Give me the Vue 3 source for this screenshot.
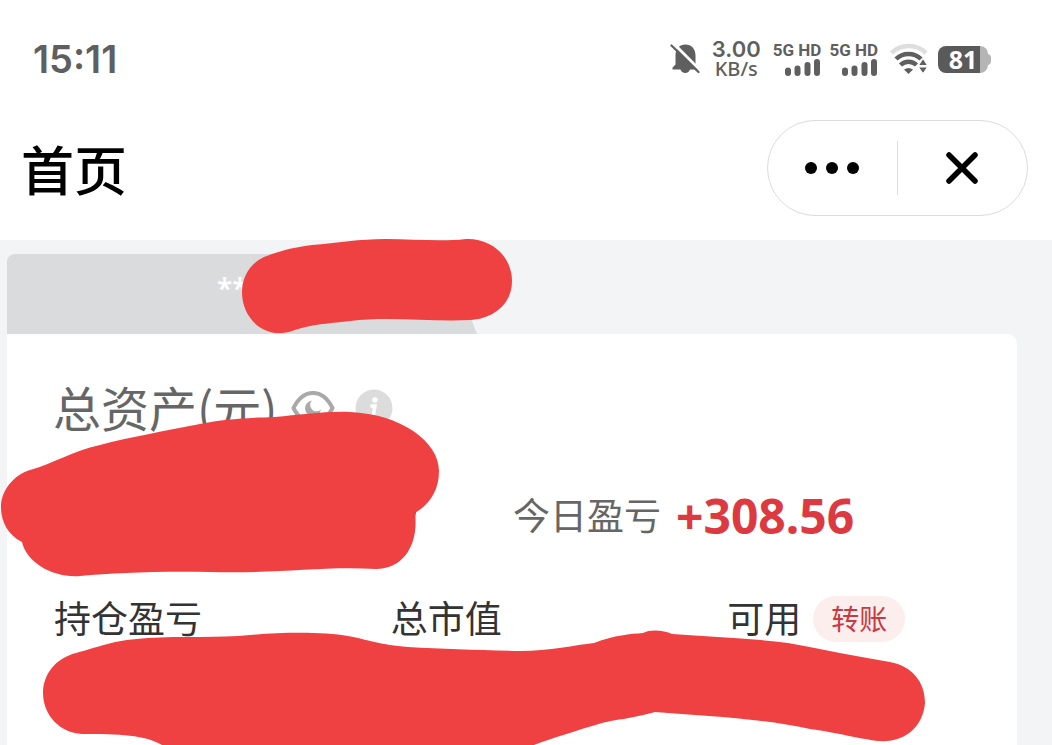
<script setup>
const networks = ['sim1', 'sim2']
const metrics = [
  { name: '持仓盈亏' },
  { name: '总市值' },
  { name: '可用', action: '转账' }
]
</script>

<template>
  <div class="page">
    <header class="top">
      <div class="status">
        <span class="clock">15:11</span>
        <div class="indicators">
          <svg class="bell" viewBox="0 0 30 32" width="30" height="32" aria-hidden="true">
            <path d="M2.500 26.500V24.500L5.500 21.500V12.500C5.500 6 9.500 1.500 15.500 1.500s10 4.500 10 11v9l2.500 3v2H20a5 5 0 0 1-9.500 0Z" fill="#5f5f5f" />
            <path d="M4 1 31 28" stroke="#fff" stroke-width="3" />
            <path d="M1.500 2.500 28.500 29" stroke="#5f5f5f" stroke-width="2.200" stroke-linecap="round" />
          </svg>
          <div class="speed"><b>3.00</b><span>KB/s</span></div>
          <div v-for="n in networks" :key="n" class="network">
            <span>5G HD</span>
            <svg viewBox="0 0 37 18" width="37" height="18" aria-hidden="true">
              <g stroke="#5f5f5f" stroke-width="6" stroke-linecap="round">
                <path d="M4 11.500v2.500M13.500 9.500v4.500M23.500 6v8M33 3v11" />
              </g>
            </svg>
          </div>
          <svg class="wifi" viewBox="0 0 38 32" width="38" height="32" aria-hidden="true">
            <g fill="none" stroke-width="4.500">
              <path d="M1.500 10A25 25 0 0 1 36 10" stroke="#dedede" />
              <path d="M6 16A18 18 0 0 1 31 16" stroke="#5f5f5f" />
              <path d="M10.500 22A11.500 11.500 0 0 1 26.500 22" stroke="#5f5f5f" />
            </g>
            <path d="M14 26.500q4.500-3 9 0L18.500 31Z" fill="#5f5f5f" />
            <path d="M28.500 22.500 33 15.500 37.500 22.500ZM28.500 24H37.500L33 30.500Z" fill="#5f5f5f" stroke="#fff" stroke-width="1" />
          </svg>
          <div class="battery"><span>81</span></div>
        </div>
      </div>
      <div class="titlebar">
        <h1>首页</h1>
        <div class="capsule">
          <button type="button" aria-label="更多">
            <svg viewBox="0 0 56 14" width="56" height="14"><circle cx="7" cy="7" r="6" /><circle cx="28" cy="7" r="6" /><circle cx="49" cy="7" r="6" /></svg>
          </button>
          <i></i>
          <button type="button" aria-label="关闭">
            <svg viewBox="0 0 34 34" width="34" height="34"><path d="M4 4 30 30M30 4 4 30" stroke="#000" stroke-width="5.500" stroke-linecap="round" /></svg>
          </button>
        </div>
      </div>
    </header>

    <main class="content">
      <div class="tab"><span>**</span></div>
      <section class="card">
        <div class="heading">
          <h2>总资产(元)</h2>
          <button type="button" aria-label="显示或隐藏金额">
            <svg viewBox="0 0 44 36" width="44" height="36">
              <path d="M2.500 18Q10 3 22 3T41.500 18Q34 33 22 33T2.500 18Z" fill="none" stroke="#a9a9a9" stroke-width="4" />
              <path d="M21 10.500A8 8 0 1 0 30 19.500A6 6 0 0 1 21 10.500Z" fill="#a9a9a9" />
            </svg>
          </button>
          <button type="button" aria-label="说明">
            <svg viewBox="0 0 38 38" width="38" height="38">
              <circle cx="19" cy="19" r="18.500" fill="#dcdcdc" />
              <circle cx="20" cy="11" r="2.800" fill="#fff" />
              <path d="M15.500 17H20L18 28H22" fill="none" stroke="#fff" stroke-width="3.500" />
            </svg>
          </button>
        </div>
        <div class="today">
          <div class="profit"><span>今日盈亏</span><strong>+308.56</strong></div>
        </div>
        <div class="metrics">
          <div v-for="m in metrics" :key="m.name" class="metric">
            <span>{{ m.name }}</span>
            <button v-if="m.action" type="button">{{ m.action }}</button>
          </div>
        </div>
      </section>
    </main>

    <svg class="marks" viewBox="0 0 1052 745" width="1052" height="745" aria-hidden="true">
      <path d="M410 513 416 511 415 517 412 521Z" fill="#222" />
      <g fill="#ef4142">
        <path d="M264 257C282 250 296 247 312 245C337 243 360 239 385 239C415 239 440 242 466 239C492 238 512 257 512 281C512 305 492 319 470 320C430 322 390 316 350 321C325 324 312 324 292 331C265 340 242 319 242 292C242 276 251 263 264 257Z" />
        <path d="M30 470C55 463 72 451 100 445C130 437 165 431 200 424C225 419 245 418 275 417C300 415 325 411 350 412C400 414 439 441 439 471C439 490 430 504 415 513C419 545 403 569 376 569C320 566 280 574 210 572C155 571 115 573 80 576C53 578 27 563 22 542C8 535 1 522 1 507C1 490 14 475 30 470Z" />
        <path d="M76 653C105 645 115 640 148 638C180 636 220 638 250 635C285 632 325 632 348 636C370 640 380 645 408 647C445 649 480 650 520 651C550 651 575 645 594 643C615 635 630 634 643 633C650 629 664 630 672 634C710 637 750 638 788 643C825 650 855 656 890 662C912 666 925 682 925 703C923 726 906 743 878 741C855 738 840 733 810 729C760 718 705 716 655 712C630 719 618 719 602 723C575 731 553 738 534 745L530 750H175L162 745C145 735 120 734 82 734C60 733 43 715 43 693C43 674 56 658 76 653Z" />
      </g>
    </svg>
  </div>
</template>

<style>
body { background: #f3f4f6; }
</style>

<style scoped>
* { box-sizing: border-box; }
.page {
  position: relative;
  display: flex;
  flex-direction: column;
  min-height: 100vh;
  overflow: hidden;
  font-family: "Noto Sans CJK SC", sans-serif;
  background: #f3f4f6;
}
button { padding: 0; border: 0; background: none; font: inherit; display: flex; align-items: center; justify-content: center; }
svg { display: block; flex: none; }
h1, h2 { margin: 0; }
.top { background: #fff; padding-bottom: 24px; }
.status {
  display: flex;
  align-items: center;
  justify-content: space-between;
  height: 118px;
  padding: 0 60px 0 33px;
  color: #5f5f5f;
  font-family: Inter, sans-serif;
}
.clock { font-size: 38px; font-weight: 600; }
.indicators { display: flex; align-items: center; gap: 12px; }
.speed { display: flex; flex-direction: column; align-items: center; line-height: 20px; }
.speed b { font-size: 22px; font-weight: 600; }
.speed span { font: 500 20px/20px "Noto Sans", sans-serif; }
.network { display: flex; flex-direction: column; align-items: flex-end; }
.network + .network { margin-left: -4px; }
.network span { font: 700 17px/18px Roboto, sans-serif; }
.battery {
  position: relative;
  width: 50px;
  height: 27px;
  margin-right: 4px;
  border-radius: 8px;
  background: linear-gradient(90deg, #5a5a5a 42px, #b4b4b4 42px);
  color: #fff;
  font: 700 25px/27px "Noto Sans", sans-serif;
  text-align: center;
}
.battery::after {
  content: "";
  position: absolute;
  right: -3px;
  top: 8px;
  width: 4px;
  height: 11px;
  border-radius: 0 4px 4px 0;
  background: #b4b4b4;
}
.wifi { margin-right: -2px; }
.titlebar { display: flex; align-items: center; justify-content: space-between; padding: 2px 24px 0 21px; }
h1 { font-size: 53px; line-height: 96px; font-weight: 500; }
.capsule {
  display: flex;
  align-items: center;
  width: 261px;
  height: 96px;
  border: 1px solid #dcdcdc;
  border-radius: 48px;
}
.capsule button { flex: 1; height: 100%; padding-right: 2px; }
.capsule i { width: 1px; height: 54px; background: #dcdcdc; }
.content { flex: 1; display: flex; flex-direction: column; padding: 14px 35px 0 7px; }
.tab {
  width: 470px;
  height: 80px;
  padding: 16px 0 0 210px;
  border-radius: 8px 0 0 0;
  background: #dadbdd;
  clip-path: polygon(0 0, 440px 0, 100% 100%, 0 100%);
  color: #fff;
  font: 600 28px/36px "Noto Sans", sans-serif;
}
.card { flex: 1; padding-top: 46px; border-radius: 0 10px 0 0; background: #fff; }
.heading { display: flex; align-items: center; height: 56px; padding-left: 46px; }
h2 { padding-bottom: 4px; color: #666; font-size: 48px; line-height: 56px; font-weight: 400; }
.heading button { margin-left: 20px; }
.heading h2 + button { margin-left: 14px; }
.today { display: grid; grid-template-columns: 1fr 1fr; margin: 52px 0; }
.profit { grid-column: 2; display: flex; align-items: center; gap: 15px; height: 56px; padding-left: 1px; }
.profit span { padding-bottom: 4px; color: #666; font-size: 37px; white-space: nowrap; }
.profit strong { color: #dc3a40; font: 700 48px/56px "Noto Sans", sans-serif; }
.metrics { display: grid; grid-template-columns: repeat(3, 1fr); }
.metric { display: flex; align-items: center; gap: 12px; height: 46px; padding-left: 47px; color: #333; font-size: 37px; white-space: nowrap; }
.metric span { padding-bottom: 4px; }
.metric button { width: 92px; height: 46px; padding-bottom: 2px; border-radius: 23px; background: #fdeeee; color: #c9393f; font-size: 28px; line-height: 44px; }
.marks { position: absolute; top: 0; left: 0; pointer-events: none; }
</style>
